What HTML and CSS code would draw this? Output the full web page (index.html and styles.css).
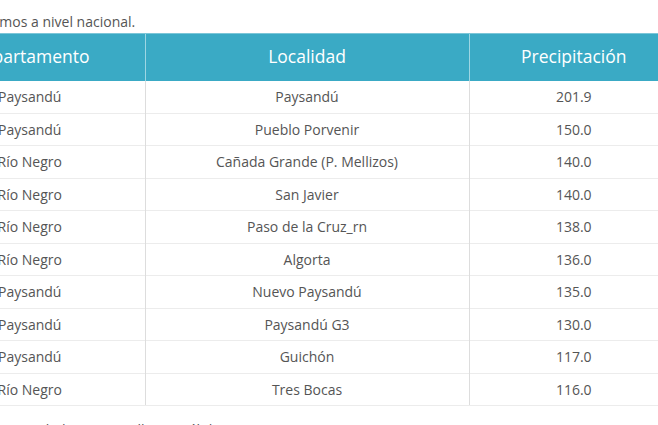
FILE: index.html
```html
<!DOCTYPE html>
<html lang="es">
<head>
<meta charset="utf-8">
<title>Precipitaciones</title>
<link rel="stylesheet" href="styles.css">
</head>
<body>
<div class="wrap">
  <p class="intro">Registros máximos a nivel nacional.</p>
  <table class="rain">
    <colgroup>
      <col class="c1"><col class="c2"><col class="c3">
    </colgroup>
    <thead>
      <tr><th>Departamento</th><th>Localidad</th><th>Precipitación</th></tr>
    </thead>
    <tbody>
      <tr><td>Paysandú</td><td>Paysandú</td><td>201.9</td></tr>
      <tr><td>Paysandú</td><td>Pueblo Porvenir</td><td>150.0</td></tr>
      <tr><td>Río Negro</td><td>Cañada Grande (P. Mellizos)</td><td>140.0</td></tr>
      <tr><td>Río Negro</td><td>San Javier</td><td>140.0</td></tr>
      <tr><td>Río Negro</td><td>Paso de la Cruz_rn</td><td>138.0</td></tr>
      <tr><td>Río Negro</td><td>Algorta</td><td>136.0</td></tr>
      <tr><td>Paysandú</td><td>Nuevo Paysandú</td><td>135.0</td></tr>
      <tr><td>Paysandú</td><td>Paysandú G3</td><td>130.0</td></tr>
      <tr><td>Paysandú</td><td>Guichón</td><td>117.0</td></tr>
      <tr><td>Río Negro</td><td>Tres Bocas</td><td>116.0</td></tr>
    </tbody>
  </table>
  <p class="note">Acumulados en mm, lluvias válidas mayores a 0.1 mm.</p>
</div>
</body>
</html>
```

FILE: styles.css
```css
html {
  overflow: hidden;
}
body {
  margin: 0;
  padding-top: 12px;
  font-family: "Open Sans", "DejaVu Sans", sans-serif;
  font-size: 14px;
  color: #555;
  background: #fff;
}
.wrap {
  margin-left: -85px;
  width: 763px;
}
.intro {
  margin: 0 0 1px -11px;
  line-height: 20px;
}
.rain {
  border-collapse: collapse;
  table-layout: fixed;
  width: 763px;
}
.c1 { width: 230px; }
.c2 { width: 324px; }
.c3 { width: 209px; }
.rain th {
  background: #3aaac5;
  color: #fff;
  font-weight: normal;
  font-size: 17.5px;
  line-height: 23px;
  padding: 11px 8px 13px;
  text-align: center;
  border-top: 1px solid #7cc6d8;
  border-left: 1px solid #9ed6e3;
}
.rain th:first-child { border-left: none; }
.rain td {
  text-align: center;
  line-height: 19.5px;
  padding: 6px 8px;
  border-top: 1px solid #ececec;
  border-left: 1px solid #dddddd;
}
.rain tbody tr:first-child td { border-top: none; }
.rain td:first-child { border-left: none; }
.rain tbody tr:last-child td { border-bottom: 1px solid #ececec; }
.note {
  margin: 14px 0 0 85px;
  line-height: 20px;
}
```
